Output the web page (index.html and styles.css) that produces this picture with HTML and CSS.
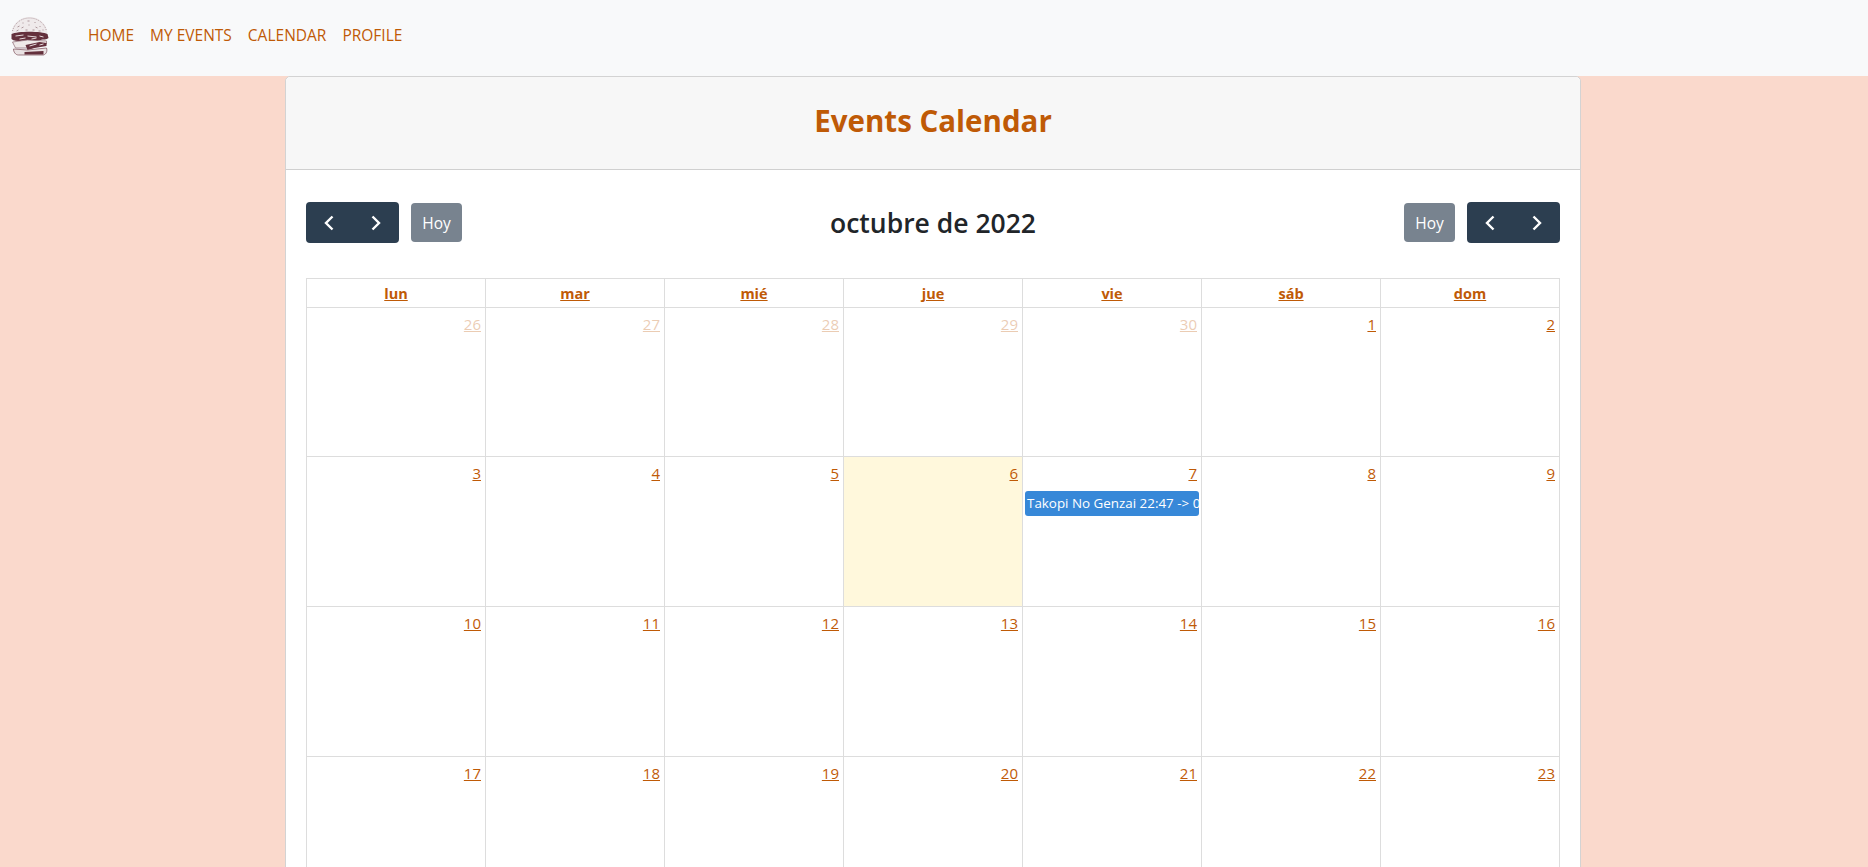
FILE: index.html
```html
<!DOCTYPE html>
<html lang="en">
<head>
  <meta charset="UTF-8" />
  <title>Events Calendar</title>
  <link rel="stylesheet" href="styles.css">
</head>
<body>
  <nav class="navbar">
    <a class="brand" href="#">
      <svg width="41" height="40" viewBox="0 0 40 40">
        <path d="M2 17C3 7 11 1 20 1s17 6 18 16z" fill="#efeaeb"/>
        <path d="M3 15C5 7 12 2 20 2s15 5 17 13" fill="none" stroke="#a58d92" stroke-width=".8" stroke-dasharray="1 1"/>
        <path d="M8 11l2-1M13 7l1 0M18 5l2 0M25 6l1 1M30 10l1 1M12 12l2-1M19 9l1 0M26 11l2 1M33 14l1 0M7 15l2-1M16 14l2 0M23 14l2 0M29 15l2 0" stroke="#a58d92" stroke-width=".9"/>
        <path d="M2 18c6-3 30-3 36 0l1 4c-2 2-5 1-8 2-6 2-14 0-20 1-3 0-7 0-9-2z" fill="#64303c"/>
        <path d="M6 20l8-1M18 20l9 1M30 20l4 1M10 23l6-1M22 23l5-1" stroke="#e4d8da" stroke-width="1"/>
        <path d="M3 26l15-2 19 1v3l-15 4H6z" fill="#efe9e8" stroke="#8a6670" stroke-width=".7"/>
        <path d="M16 29l14-3 7 1v3l-12 2-7 2z" fill="#64303c"/>
        <path d="M20 30l7-2M30 29l4-1" stroke="#e4d8da" stroke-width="1"/>
        <path d="M4 33l14 1 19-2c1 3 0 6-3 7H9c-3 0-5-3-5-6z" fill="#e9e2e3" stroke="#7a4a55" stroke-width=".7"/>
        <path d="M15 36l19-1v3.500H15z" fill="#64303c"/>
      </svg>
    </a>
    <ul class="nav-links">
      <li><a href="#">HOME</a></li>
      <li><a href="#">MY EVENTS</a></li>
      <li><a href="#">CALENDAR</a></li>
      <li><a href="#">PROFILE</a></li>
    </ul>
    <a class="logout" href="#">LOGOUT</a>
  </nav>

  <main class="card">
    <div class="card-header">
      <h1>Events Calendar</h1>
    </div>
    <div class="card-body">
      <div class="toolbar">
        <div class="toolbar-side">
          <div class="btn-group">
            <button type="button"><svg width="16" height="16" viewBox="0 0 16 16"><path d="M11.500 1.500 5 8l6.500 6.500" /></svg></button>
            <button type="button"><svg width="16" height="16" viewBox="0 0 16 16"><path d="M4.500 1.500 11 8l-6.500 6.500" /></svg></button>
          </div>
          <button type="button" class="btn-today">Hoy</button>
        </div>
        <h2>octubre de 2022</h2>
        <div class="toolbar-side toolbar-right">
          <button type="button" class="btn-today">Hoy</button>
          <div class="btn-group">
            <button type="button"><svg width="16" height="16" viewBox="0 0 16 16"><path d="M11.500 1.500 5 8l6.500 6.500" /></svg></button>
            <button type="button"><svg width="16" height="16" viewBox="0 0 16 16"><path d="M4.500 1.500 11 8l-6.500 6.500" /></svg></button>
          </div>
        </div>
      </div>

      <table class="calendar">
        <thead>
          <tr>
            <th><a href="#">lun</a></th>
            <th><a href="#">mar</a></th>
            <th><a href="#">mié</a></th>
            <th><a href="#">jue</a></th>
            <th><a href="#">vie</a></th>
            <th><a href="#">sáb</a></th>
            <th><a href="#">dom</a></th>
          </tr>
        </thead>
        <tbody>
          <tr>
            <td class="other"><a href="#">26</a></td>
            <td class="other"><a href="#">27</a></td>
            <td class="other"><a href="#">28</a></td>
            <td class="other"><a href="#">29</a></td>
            <td class="other"><a href="#">30</a></td>
            <td><a href="#">1</a></td>
            <td><a href="#">2</a></td>
          </tr>
          <tr>
            <td><a href="#">3</a></td>
            <td><a href="#">4</a></td>
            <td><a href="#">5</a></td>
            <td class="today"><a href="#">6</a></td>
            <td><a href="#">7</a><div class="event">Takopi No Genzai 22:47 -&gt; 00:00</div></td>
            <td><a href="#">8</a></td>
            <td><a href="#">9</a></td>
          </tr>
          <tr>
            <td><a href="#">10</a></td>
            <td><a href="#">11</a></td>
            <td><a href="#">12</a></td>
            <td><a href="#">13</a></td>
            <td><a href="#">14</a></td>
            <td><a href="#">15</a></td>
            <td><a href="#">16</a></td>
          </tr>
          <tr>
            <td><a href="#">17</a></td>
            <td><a href="#">18</a></td>
            <td><a href="#">19</a></td>
            <td><a href="#">20</a></td>
            <td><a href="#">21</a></td>
            <td><a href="#">22</a></td>
            <td><a href="#">23</a></td>
          </tr>
        </tbody>
      </table>
    </div>
  </main>
</body>
</html>
```

FILE: styles.css
```css
html { overflow: hidden; }
body { margin: 0; background: #fad9cc; font-family: "Open Sans", "Noto Sans", sans-serif; font-size: 14px; color: #212529; }
a { color: #bf5a06; }

.navbar { display: flex; align-items: center; height: 76px; width: 1900px; background: #f8f9fa; }
.brand { display: flex; margin-left: 9px; margin-top: -5px; }
.nav-links { display: flex; gap: 16px; list-style: none; margin: -7px 0 0 38px; padding: 0; }
.nav-links a, .logout { font-size: 15.500px; text-decoration: none; }
.logout { margin-left: auto; width: 90px; margin-right: -58px; margin-top: -7px; }

.card { width: 1296px; margin-left: 285px; background: #fff; border: 1px solid #d3d3d3; border-radius: 5px; box-sizing: border-box; }
.card-header { background: #f7f7f7; height: 93px; padding-bottom: 6px; border-bottom: 1px solid #d0d0d0; box-sizing: border-box; display: flex; align-items: center; justify-content: center; border-radius: 5px 5px 0 0; }
.card-header h1 { margin: 0; font-size: 29.500px; font-weight: 700; color: #bf5a06; }
.card-body { padding: 32px 20px 20px; }

.toolbar { display: flex; align-items: center; justify-content: space-between; height: 41px; margin-bottom: 35px; }
.toolbar h2 { margin: 0; font-size: 26.500px; font-weight: 600; color: #212529; }
.toolbar-side { display: flex; align-items: center; gap: 12px; width: 300px; }
.toolbar-right { justify-content: flex-end; }
.btn-group { display: flex; background: #2c3e50; border-radius: 4px; height: 41px; }
.btn-group button { width: 46.500px; border: 0; background: none; padding: 0; display: flex; align-items: center; justify-content: center; }
.btn-group svg path { fill: none; stroke: #fff; stroke-width: 2.400; }
.btn-today { width: 51px; height: 39px; border: 0; border-radius: 4px; background: #78838f; color: #fff; font-family: inherit; font-size: 15.500px; padding: 0; }

.calendar { border-collapse: collapse; table-layout: fixed; width: 1254px; }
.calendar th, .calendar td { border: 1px solid #ddd; padding: 0; }
.calendar th { height: 28px; font-size: 14.500px; font-weight: 700; }
.calendar td { height: 149px; vertical-align: top; text-align: right; }
.calendar tbody tr:first-child td { height: 148px; }
.calendar td > a { display: inline-block; padding: 6px 4px 8px; font-size: 15px; }
.calendar td.other > a { opacity: .3; }
.calendar td.today { background: #fff8dc; }
.event { margin: 0 2px; height: 25px; line-height: 25px; padding: 0 2px; background: #3788d8; border-radius: 3px; color: #fff; font-size: 13.400px; text-align: left; white-space: nowrap; overflow: hidden; }
```
